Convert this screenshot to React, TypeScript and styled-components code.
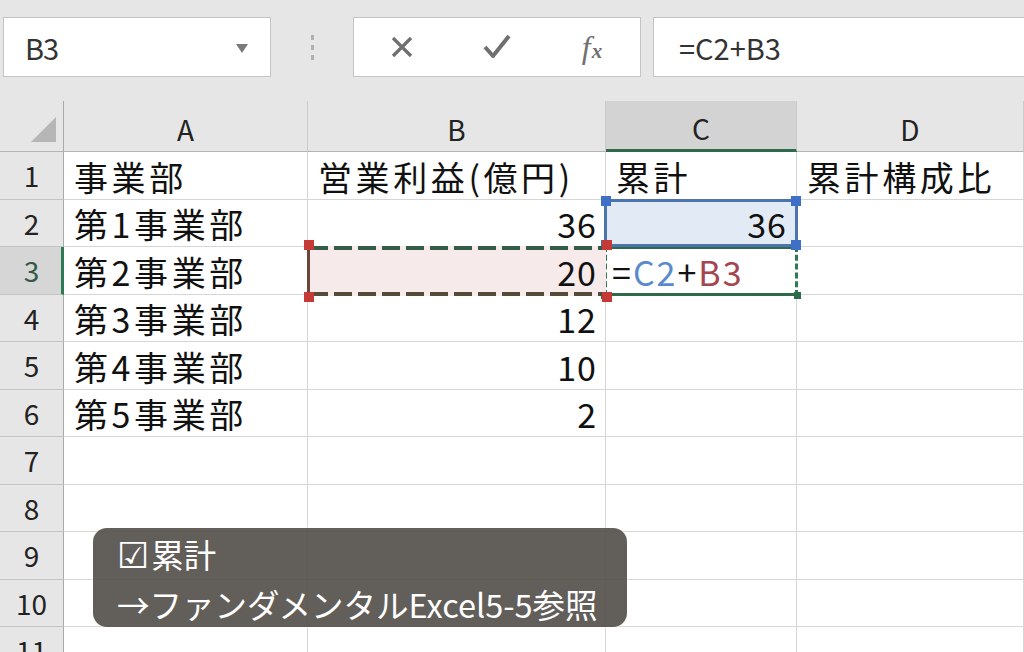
import React from "react";
import styled, { createGlobalStyle, css } from "styled-components";

const GlobalStyle = createGlobalStyle`
  html, body {
    margin: 0;
    padding: 0;
    background: #e6e6e6;
    overflow: hidden;
  }
  * {
    box-sizing: border-box;
  }
`;

const FONT = `"Noto Sans CJK JP", "Noto Sans", sans-serif`;

type Tone = "blue" | "red" | "active";

interface CellData {
  text?: string;
  align?: "left" | "right";
  tone?: Tone;
  formula?: boolean;
}

const rows: CellData[][] = [
  [{ text: "事業部" }, { text: "営業利益(億円)" }, { text: "累計" }, { text: "累計構成比" }],
  [{ text: "第1事業部" }, { text: "36", align: "right" }, { text: "36", align: "right", tone: "blue" }, {}],
  [{ text: "第2事業部" }, { text: "20", align: "right", tone: "red" }, { formula: true, tone: "active" }, {}],
  [{ text: "第3事業部" }, { text: "12", align: "right" }, {}, {}],
  [{ text: "第4事業部" }, { text: "10", align: "right" }, {}, {}],
  [{ text: "第5事業部" }, { text: "2", align: "right" }, {}, {}],
  [{}, {}, {}, {}],
  [{}, {}, {}, {}],
  [{}, {}, {}, {}],
  [{}, {}, {}, {}],
  [{}, {}, {}, {}],
];

const columns = ["A", "B", "C", "D"];
const selectedCol = 2;
const selectedRow = 2;

const handles = ["tl", "tr", "bl", "br"] as const;

function FormulaText() {
  return (
    <>
      =<RefBlue>C2</RefBlue>+<RefRed>B3</RefRed>
    </>
  );
}

export default function App() {
  return (
    <>
      <GlobalStyle />
      <Screen>
        <FormulaBar>
          <NameBox>
            <span>B3</span>
            <DropArrow />
          </NameBox>
          <Grip>
            <i />
            <i />
            <i />
          </Grip>
          <ButtonBox>
            <IconSlot>
              <svg width="26" height="26" viewBox="0 0 26 26">
                <path d="M4 4 L22 22 M22 4 L4 22" stroke="#6f6f6f" strokeWidth="3.2" fill="none" />
              </svg>
            </IconSlot>
            <IconSlot>
              <svg width="30" height="28" viewBox="0 0 30 28">
                <path d="M3 14 L11 23 L27 3" stroke="#6f6f6f" strokeWidth="4" fill="none" strokeLinejoin="round" />
              </svg>
            </IconSlot>
            <IconSlot>
              <Fx>
                f<sub>x</sub>
              </Fx>
            </IconSlot>
          </ButtonBox>
          <FormulaInput>{"=C2+B3"}</FormulaInput>
        </FormulaBar>

        <Sheet>
          <Corner>
            <CornerTriangle />
          </Corner>
          {columns.map((c, i) => (
            <ColHeader key={c} $selected={i === selectedCol}>
              {c}
            </ColHeader>
          ))}
          {rows.map((row, r) => (
            <React.Fragment key={`row_${r}`}>
              <RowHeader $selected={r === selectedRow}>{r + 1}</RowHeader>
              {row.map((cell, c) => (
                <Cell key={`cell_${r}_${c}`} $align={cell.align} $tone={cell.tone}>
                  {cell.formula ? <FormulaText /> : cell.text}
                  {cell.tone &&
                    handles.map((h) => <Handle key={h} $pos={h} $tone={cell.tone as Tone} />)}
                </Cell>
              ))}
            </React.Fragment>
          ))}
          <Caption>
            <CaptionLine>
              <CheckMark>☑</CheckMark>累計
            </CaptionLine>
            <CaptionLine>→ファンダメンタルExcel5-5参照</CaptionLine>
          </Caption>
        </Sheet>
      </Screen>
    </>
  );
}

const Screen = styled.div`
  width: 1024px;
  height: 652px;
  overflow: hidden;
  display: flex;
  flex-direction: column;
  font-family: ${FONT};
  background: #e6e6e6;
`;

const FormulaBar = styled.div`
  height: 101px;
  flex-shrink: 0;
  display: flex;
  align-items: flex-start;
  padding: 17px 0 0 3px;
`;

const Box = styled.div`
  height: 60px;
  background: #fff;
  border: 1px solid #c4c4c4;
  display: flex;
  align-items: center;
`;

const NameBox = styled(Box)`
  width: 268px;
  padding: 0 22px 0 21px;
  justify-content: space-between;
  font-size: 29px;
  color: #333;
  letter-spacing: -1px;
`;

const DropArrow = styled.div`
  width: 0;
  height: 0;
  border-left: 6px solid transparent;
  border-right: 6px solid transparent;
  border-top: 9px solid #7a7a7a;
  margin-top: 2px;
`;

const Grip = styled.div`
  width: 82px;
  height: 60px;
  display: flex;
  flex-direction: column;
  align-items: center;
  justify-content: center;
  gap: 5px;

  i {
    display: block;
    width: 3px;
    height: 5px;
    background: #b0b0b0;
  }
`;

const ButtonBox = styled(Box)`
  width: 288px;
  padding: 0 20px 0 20px;
  justify-content: space-between;
`;

const IconSlot = styled.div`
  width: 56px;
  display: flex;
  align-items: center;
  justify-content: center;
`;

const Fx = styled.span`
  font-family: "Liberation Serif", serif;
  font-style: italic;
  font-size: 32px;
  color: #707070;
  line-height: 1;

  sub {
    font-size: 21px;
    font-weight: bold;
    vertical-align: 0;
    margin-left: 1px;
  }
`;

const FormulaInput = styled(Box)`
  flex: 1;
  margin-left: 12px;
  margin-right: -4px;
  padding-left: 25px;
  font-size: 29px;
  color: #333;
  letter-spacing: 0;
`;

const Sheet = styled.div`
  position: relative;
  display: grid;
  grid-template-columns: 64px 244px 298px 191px 1fr;
  grid-template-rows: 51px repeat(11, 47.5px);
  background: #fff;
`;

const headerBase = css`
  background: #e6e6e6;
  color: #222;
  display: flex;
  align-items: center;
  justify-content: center;
`;

const Corner = styled.div`
  ${headerBase};
  position: relative;
  border-right: 1px solid #a9a9a9;
  border-bottom: 1px solid #b4b4b4;
`;

const CornerTriangle = styled.div`
  position: absolute;
  right: 7px;
  bottom: 9px;
  width: 0;
  height: 0;
  border-left: 25px solid transparent;
  border-bottom: 25px solid #b6b6b6;
`;

const ColHeader = styled.div<{ $selected?: boolean }>`
  ${headerBase};
  font-size: 28px;
  padding-top: 6px;
  border-right: 1px solid #cbcbcb;
  border-bottom: ${(p) => (p.$selected ? "3px solid #2f6a4c" : "1px solid #b4b4b4")};
  background: ${(p) => (p.$selected ? "#d3d3d3" : "#e6e6e6")};
`;

const RowHeader = styled.div<{ $selected?: boolean }>`
  ${headerBase};
  font-size: 28px;
  border-bottom: 1px solid #c4c4c4;
  border-right: ${(p) => (p.$selected ? "3px solid #2f7a56" : "1px solid #a9a9a9")};
  background: ${(p) => (p.$selected ? "#d6d6d6" : "#e6e6e6")};
  color: ${(p) => (p.$selected ? "#2f5a47" : "#222")};
  padding-left: ${(p) => (p.$selected ? "2px" : "0")};
`;

const dash = (color: string) =>
  `repeating-linear-gradient(90deg, ${color} 0 18px, transparent 18px 24px)`;

const toneStyles = {
  blue: css`
    background: #e2eaf5;
    border: 3px solid #4c74ad;
    margin: -1px -1px 0 -2px;
    z-index: 2;
  `,
  red: css`
    background: ${dash("#345c46")} top left / 100% 4px no-repeat,
      ${dash("#544b3a")} bottom left / 100% 4px no-repeat,
      #f7eaea;
    border-left: 3px solid #6a4538;
    border-right: none;
    border-bottom: none;
    margin: -1px 0 -1px -1px;
    padding-right: 9px;
    z-index: 2;
  `,
  active: css`
    background: #fff;
    border-top: 3px solid #2e6a4a;
    border-bottom: 3px solid #2e6a4a;
    border-left: 3px dashed #2e7a52;
    border-right: 3px dashed #2e7a52;
    margin: -1px -1px -1px -2px;
    z-index: 1;
    padding-left: 5px;
    letter-spacing: 2px;
  `,
};

const Cell = styled.div<{ $align?: "left" | "right"; $tone?: Tone }>`
  position: relative;
  display: flex;
  align-items: center;
  justify-content: ${(p) => (p.$align === "right" ? "flex-end" : "flex-start")};
  padding: 2px 8px 0 10px;
  border-right: 1px solid #d6d6d6;
  border-bottom: 1px solid #d6d6d6;
  font-size: 34px;
  letter-spacing: ${(p) => (p.$align === "right" ? "1px" : "3.6px")};
  color: #111;
  white-space: nowrap;
  ${(p) => (p.$tone ? toneStyles[p.$tone] : "")};
`;

const handleColor: Record<Tone, string> = {
  blue: "#3d70c6",
  red: "#c53a37",
  active: "#2e6a4a",
};

const Handle = styled.span<{ $pos: "tl" | "tr" | "bl" | "br"; $tone: Tone }>`
  position: absolute;
  width: ${(p) => (p.$tone === "active" ? "7px" : "10px")};
  height: ${(p) => (p.$tone === "active" ? "7px" : "10px")};
  background: ${(p) => handleColor[p.$tone]};
  ${(p) => (p.$pos[0] === "t" ? "top: -6px;" : "bottom: -6px;")}
  ${(p) => (p.$pos[1] === "l" ? "left: -6px;" : "right: -6px;")}
  ${(p) => (p.$tone === "active" && p.$pos[0] === "t" ? "display: none;" : "")}
`;

const RefBlue = styled.span`
  color: #5a8acb;
`;

const RefRed = styled.span`
  color: #a3464f;
`;

const Caption = styled.div`
  position: absolute;
  left: 93px;
  top: 427px;
  width: 534px;
  height: 99px;
  border-radius: 14px;
  background: rgba(86, 82, 78, 0.93);
  box-shadow: 0 0 0 1px rgba(255, 255, 255, 0.7);
  padding: 2px 0 0 24px;
  display: flex;
  flex-direction: column;
  z-index: 5;
`;

const CaptionLine = styled.div`
  color: #fff;
  font-size: 32.5px;
  line-height: 48px;
  white-space: nowrap;
  letter-spacing: 0;
`;

const CheckMark = styled.span`
  font-family: "DejaVu Sans", sans-serif;
  font-size: 36px;
  margin-right: 2px;
`;
